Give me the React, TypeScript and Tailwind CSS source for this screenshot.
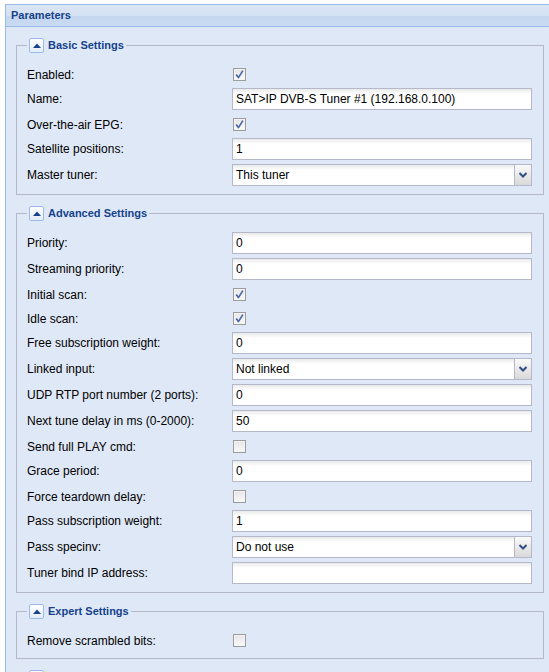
import React from "react";

type Field =
  | { kind: "check"; label: string; checked: boolean }
  | { kind: "text"; label: string; value: string }
  | { kind: "combo"; label: string; value: string };

type Section = { title: string; fields: Field[] };

const sections: Section[] = [
  {
    title: "Basic Settings",
    fields: [
      { kind: "check", label: "Enabled:", checked: true },
      { kind: "text", label: "Name:", value: "SAT>IP DVB-S Tuner #1 (192.168.0.100)" },
      { kind: "check", label: "Over-the-air EPG:", checked: true },
      { kind: "text", label: "Satellite positions:", value: "1" },
      { kind: "combo", label: "Master tuner:", value: "This tuner" },
    ],
  },
  {
    title: "Advanced Settings",
    fields: [
      { kind: "text", label: "Priority:", value: "0" },
      { kind: "text", label: "Streaming priority:", value: "0" },
      { kind: "check", label: "Initial scan:", checked: true },
      { kind: "check", label: "Idle scan:", checked: true },
      { kind: "text", label: "Free subscription weight:", value: "0" },
      { kind: "combo", label: "Linked input:", value: "Not linked" },
      { kind: "text", label: "UDP RTP port number (2 ports):", value: "0" },
      { kind: "text", label: "Next tune delay in ms (0-2000):", value: "50" },
      { kind: "check", label: "Send full PLAY cmd:", checked: false },
      { kind: "text", label: "Grace period:", value: "0" },
      { kind: "check", label: "Force teardown delay:", checked: false },
      { kind: "text", label: "Pass subscription weight:", value: "1" },
      { kind: "combo", label: "Pass specinv:", value: "Do not use" },
      { kind: "text", label: "Tuner bind IP address:", value: "" },
    ],
  },
  {
    title: "Expert Settings",
    fields: [{ kind: "check", label: "Remove scrambled bits:", checked: false }],
  },
  {
    title: "",
    fields: [],
  },
];

function Checkbox({ checked }: { checked: boolean }) {
  return (
    <svg width="13" height="13" viewBox="0 0 13 13" className="block">
      <defs>
        <linearGradient id="cbg" x1="0" y1="0" x2="0" y2="1">
          <stop offset="0" stopColor="#e4e4e4" />
          <stop offset="1" stopColor="#fbfbfb" />
        </linearGradient>
      </defs>
      <rect x="0.5" y="0.5" width="12" height="12" fill="url(#cbg)" stroke="#9c9c9c" />
      <rect x="1.5" y="1.5" width="10" height="10" fill="none" stroke="#f4f4f4" />
      {checked && (
        <path
          d="M3.2 6.4 L5.4 9.6 L9.9 2.6"
          fill="none"
          stroke="#4c6aa6"
          strokeWidth="1.7"
          strokeLinejoin="round"
        />
      )}
    </svg>
  );
}

function ToggleButton() {
  return (
    <div className="flex h-[15px] w-[15px] items-center justify-center rounded-[2px] border border-[#99bbe8] bg-[linear-gradient(180deg,#ffffff_0%,#e3ecf8_100%)]">
      <svg width="8" height="5" viewBox="0 0 8 5" className="block">
        <path d="M0 5 L4 0.5 L8 5 Z" fill="#15428b" />
      </svg>
    </div>
  );
}

function ComboArrow() {
  return (
    <svg width="8" height="6" viewBox="0 0 8 6" className="block">
      <path d="M0.5 1 L4 4.5 L7.5 1" fill="none" stroke="#2f4f86" strokeWidth="2" />
    </svg>
  );
}

function FieldRow({ field }: { field: Field }) {
  const isCheck = field.kind === "check";
  return (
    <div className={`mb-[4px] flex ${isCheck ? "h-[20px]" : "h-[22px]"}`}>
      <div className="w-[205px] shrink-0 pt-[4px] text-[12px] leading-[14px] text-black">
        {field.label}
      </div>
      {field.kind === "check" && (
        <div className="pl-[1px] pt-[4px]">
          <Checkbox checked={field.checked} />
        </div>
      )}
      {field.kind === "text" && (
        <div className="flex h-[22px] w-[300px] items-center border border-[#b5b8c8] bg-[linear-gradient(180deg,#e9eaea_0px,#ffffff_5px)] px-[3px] text-[12px] leading-[14px] text-black">
          {field.value}
        </div>
      )}
      {field.kind === "combo" && (
        <div className="flex h-[22px] w-[300px] border border-[#b5b8c8] bg-[linear-gradient(180deg,#e9eaea_0px,#ffffff_5px)]">
          <div className="flex flex-1 items-center px-[3px] text-[12px] leading-[14px] text-black">
            {field.value}
          </div>
          <div className="flex w-[17px] items-center justify-center border-l border-[#b5b8c8] bg-[linear-gradient(180deg,#fafafa_0%,#e6e6e6_60%,#d9d9d9_100%)]">
            <ComboArrow />
          </div>
        </div>
      )}
    </div>
  );
}

function FieldSet({ section }: { section: Section }) {
  return (
    <fieldset className="mb-[10px] min-w-0 border border-[#b5b8c8] px-[10px] pb-[4px] pt-[10px]">
      <legend className="flex h-[17px] items-center gap-[4px] px-[2px]">
        <ToggleButton />
        {section.title && (
          <span className="text-[11px] font-bold leading-[13px] text-[#15428b]">{section.title}</span>
        )}
      </legend>
      {section.fields.map((f) => (
        <FieldRow key={f.label} field={f} />
      ))}
    </fieldset>
  );
}

export default function App() {
  return (
    <div
      className="h-[672px] w-[549px] overflow-hidden bg-white pl-[5px] pt-[4px]"
      style={{ fontFamily: '"Liberation Sans", Arial, sans-serif' }}
    >
      <div className="border-l border-t border-[#99bbe8]">
        <div className="flex h-[22px] items-center border-b border-[#99bbe8] bg-[linear-gradient(180deg,#dbe6f4_0%,#d4e1f2_50%,#c4d7ef_52%,#c8dbf2_100%)] pl-[5px] text-[11px] font-bold text-[#15428b]">
          Parameters
        </div>
        <div className="bg-[#dfe8f6] pb-[10px] pl-[10px] pr-[5px] pt-[10px]">
          {sections.map((s, i) => (
            <FieldSet key={i} section={s} />
          ))}
        </div>
      </div>
    </div>
  );
}
